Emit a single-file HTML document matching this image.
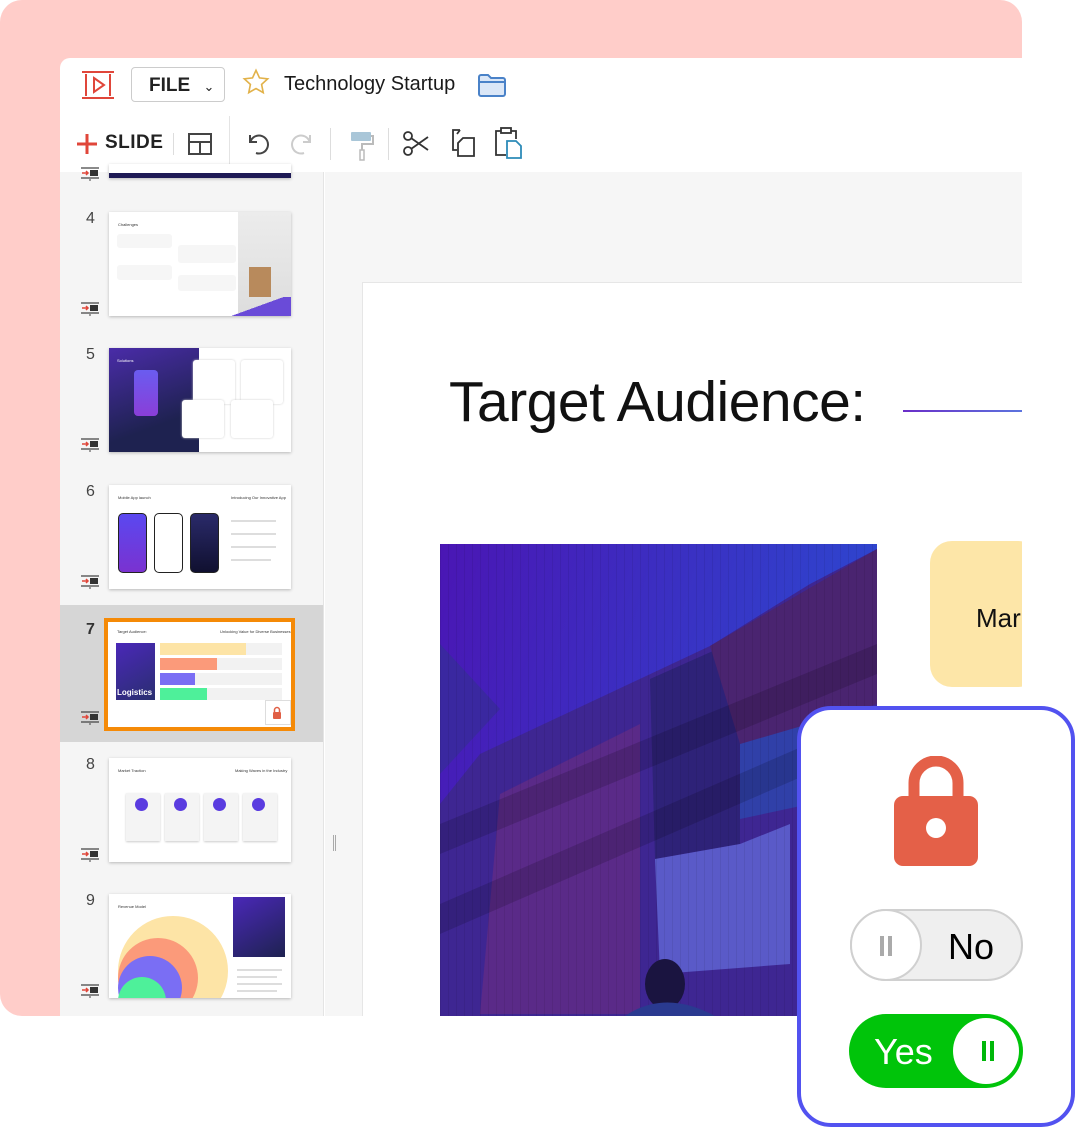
<!DOCTYPE html>
<html><head><meta charset="utf-8"><style>
*{margin:0;padding:0;box-sizing:border-box}
body{width:1076px;height:1128px;position:relative;background:#fff;font-family:"Liberation Sans",sans-serif;overflow:hidden}
.abs{position:absolute}
.pink{left:0;top:0;width:1022px;height:1016px;background:#ffcdc9;border-radius:22px}
.win{left:60px;top:58px;width:962px;height:958px;background:#fff;border-top-left-radius:10px;overflow:hidden}
.side{left:0;top:114px;width:264px;height:850px;background:#f5f5f5;border-right:1px solid #e4e4e4}
.canvas{left:265px;top:114px;width:700px;height:850px;background:#f6f6f6}
.num{font-size:16px;color:#444;left:26px}
.th{left:49px;width:182px;height:104px;background:#fff;box-shadow:0 1px 3px rgba(0,0,0,.25);overflow:hidden}
.ic{left:20px;width:20px;height:14px}
.t{font-size:4px;color:#333}
.l{height:2px;background:#ddd;position:absolute}
</style></head><body>
<div class="abs pink"></div>
<div class="abs win">
 <svg class="abs" style="left:20px;top:12px" width="36" height="30" viewBox="0 0 36 30"><path d="M2 2H34M2 28H34M6 4V26M30 4V26" stroke="#e0463a" stroke-width="2" fill="none"/><path d="M14 8L24 15L14 22Z" stroke="#e0463a" stroke-width="2" fill="none"/></svg>
 <div class="abs" style="left:71px;top:9px;width:94px;height:35px;border:1px solid #ccc;border-radius:4px;font-weight:bold;font-size:19px;color:#222;padding:7px 0 0 17px">FILE <span style="font-weight:normal;font-size:13px;margin-left:8px">&#8964;</span></div>
 <svg class="abs" style="left:182px;top:10px" width="28" height="28" viewBox="0 0 24 24"><path d="M12 2l3 6.5 7 .8-5.2 4.8 1.4 7L12 17.6 5.8 21.1l1.4-7L2 9.3l7-.8z" fill="none" stroke="#e2b24a" stroke-width="1.4"/></svg>
 <div class="abs" style="left:224px;top:15px;font-size:20px;color:#1a1a1a">Technology Startup</div>
 <svg class="abs" style="left:418px;top:15px" width="28" height="24" viewBox="0 0 28 24"><path d="M1 4a2 2 0 012-2h7l3 3h12a2 2 0 012 2v14a2 2 0 01-2 2H3a2 2 0 01-2-2z" fill="#dbe7f7" stroke="#4a82c8" stroke-width="2"/><path d="M1 9H27" stroke="#4a82c8" stroke-width="2"/></svg>
 <svg class="abs" style="left:16px;top:75px" width="22" height="22"><path d="M11 1V21M1 11H21" stroke="#e0463a" stroke-width="3"/></svg>
 <div class="abs" style="left:45px;top:74px;font-weight:bold;font-size:19px;color:#222;letter-spacing:.5px">SLIDE</div>
 <div class="abs" style="left:113px;top:75px;width:1px;height:22px;background:#ddd"></div>
 <svg class="abs" style="left:128px;top:75px" width="24" height="22"><rect x="1" y="1" width="22" height="20" fill="none" stroke="#444" stroke-width="2"/><path d="M1 9H23M12 9V21" stroke="#444" stroke-width="2"/></svg>
 <div class="abs" style="left:169px;top:58px;width:1px;height:56px;background:#e4e4e4"></div>
 <svg class="abs" style="left:184px;top:73px" width="26" height="26" viewBox="0 0 26 26"><path d="M6 4V11H13" fill="none" stroke="#444" stroke-width="2"/><path d="M6.5 10.5A9 9 0 1 1 12 22" fill="none" stroke="#444" stroke-width="2"/></svg>
 <svg class="abs" style="left:230px;top:73px" width="26" height="26" viewBox="0 0 26 26"><path d="M20 4V11H13" fill="none" stroke="#ccc" stroke-width="2"/><path d="M19.5 10.5A9 9 0 1 0 14 22" fill="none" stroke="#ccc" stroke-width="2"/></svg>
 <div class="abs" style="left:270px;top:70px;width:1px;height:32px;background:#ddd"></div>
 <svg class="abs" style="left:290px;top:72px" width="24" height="32"><rect x="1" y="2" width="20" height="9" rx="1" fill="#a9c6d8"/><path d="M21 6H23V14H12V20" fill="none" stroke="#bbb" stroke-width="2"/><rect x="10" y="20" width="4" height="10" fill="none" stroke="#bbb" stroke-width="1.5"/></svg>
 <div class="abs" style="left:328px;top:70px;width:1px;height:32px;background:#ddd"></div>
 <svg class="abs" style="left:343px;top:72px" width="27" height="27" viewBox="0 0 27 27"><circle cx="5" cy="6" r="4" fill="none" stroke="#333" stroke-width="1.8"/><circle cx="5" cy="21" r="4" fill="none" stroke="#333" stroke-width="1.8"/><path d="M8 8L25 20M8 19L25 7" stroke="#333" stroke-width="1.8"/></svg>
 <svg class="abs" style="left:390px;top:70px" width="26" height="30" viewBox="0 0 26 30"><path d="M10 2H3V22H7" fill="none" stroke="#333" stroke-width="1.8"/><path d="M10 2L7 6" stroke="#333" stroke-width="1.8"/><path d="M13 10H24V28H8V15Z" fill="none" stroke="#333" stroke-width="1.8"/></svg>
 <svg class="abs" style="left:434px;top:69px" width="28" height="32" viewBox="0 0 28 32"><path d="M7 4H2V28H12" fill="none" stroke="#333" stroke-width="1.8"/><path d="M17 4H22V12" fill="none" stroke="#333" stroke-width="1.8"/><rect x="7" y="1" width="10" height="5" fill="none" stroke="#333" stroke-width="1.8"/><path d="M13 14H22L27 19V31H13Z" fill="none" stroke="#2d8bb8" stroke-width="1.8"/></svg>

 <div class="abs side">
  <div class="abs th" style="top:-8px;height:14px"><div style="position:absolute;bottom:0;width:100%;height:5px;background:#1e1a55"></div></div>

  <div class="abs num" style="top:38px">4</div>
  <div class="abs th" style="top:40px">
   <div class="abs t" style="left:9px;top:10px">Challenges</div>
   <div class="abs" style="left:8px;top:22px;width:55px;height:14px;background:#f6f6f6;border-radius:3px"></div>
   <div class="abs" style="left:69px;top:33px;width:58px;height:18px;background:#f6f6f6;border-radius:3px"></div>
   <div class="abs" style="left:8px;top:53px;width:55px;height:15px;background:#f6f6f6;border-radius:3px"></div>
   <div class="abs" style="left:69px;top:63px;width:58px;height:16px;background:#f6f6f6;border-radius:3px"></div>
   <div class="abs" style="left:129px;top:0;width:53px;height:104px;background:linear-gradient(#ececec,#ddd)"></div>
   <div class="abs" style="left:140px;top:55px;width:22px;height:30px;background:#b88a5c"></div>
   <div class="abs" style="left:112px;top:85px;width:70px;height:20px;background:linear-gradient(160deg,transparent 50%,#6a4bd8 50%)"></div>
  </div>

  <div class="abs num" style="top:174px">5</div>
  <div class="abs th" style="top:176px">
   <div class="abs" style="left:0;top:0;width:90px;height:104px;background:linear-gradient(160deg,#4a2ca8,#1e2250 70%)"></div>
   <div class="abs" style="left:25px;top:22px;width:24px;height:46px;border-radius:4px;background:linear-gradient(#6a5cf0,#8a3ed8)"></div>
   <div class="abs t" style="left:8px;top:10px;color:#fff">Solutions</div>
   <div class="abs" style="left:84px;top:12px;width:42px;height:44px;background:#fff;border-radius:3px;box-shadow:0 0 2px #ccc"></div>
   <div class="abs" style="left:132px;top:12px;width:42px;height:44px;background:#fff;border-radius:3px;box-shadow:0 0 2px #ccc"></div>
   <div class="abs" style="left:73px;top:52px;width:42px;height:38px;background:#fff;border-radius:3px;box-shadow:0 0 2px #ccc"></div>
   <div class="abs" style="left:122px;top:52px;width:42px;height:38px;background:#fff;border-radius:3px;box-shadow:0 0 2px #ccc"></div>
  </div>

  <div class="abs num" style="top:311px">6</div>
  <div class="abs th" style="top:313px">
   <div class="abs t" style="left:9px;top:10px">Mobile App launch</div>
   <div class="abs t" style="left:122px;top:10px">Introducing Our Innovative App</div>
   <div class="abs" style="left:9px;top:28px;width:29px;height:60px;border-radius:5px;background:linear-gradient(#5a48f0,#7a32d0);border:1.5px solid #222"></div>
   <div class="abs" style="left:45px;top:28px;width:29px;height:60px;border-radius:5px;background:#fff;border:1.5px solid #222"></div>
   <div class="abs" style="left:81px;top:28px;width:29px;height:60px;border-radius:5px;background:linear-gradient(#2a2a6a,#101030);border:1.5px solid #222"></div>
   <div class="l" style="left:122px;top:35px;width:45px"></div><div class="l" style="left:122px;top:48px;width:45px"></div><div class="l" style="left:122px;top:61px;width:45px"></div><div class="l" style="left:122px;top:74px;width:40px"></div>
  </div>

  <div class="abs" style="left:0;top:433px;width:263px;height:137px;background:#d6d6d6"></div>
  <div class="abs num" style="top:449px;font-weight:bold;color:#333">7</div>
  <div class="abs th" style="left:44px;top:446px;width:191px;height:113px;border:4px solid #f58a07;box-shadow:none">
   <div class="abs t" style="left:9px;top:7px">Target Audience:</div>
   <div class="abs t" style="left:112px;top:7px">Unlocking Value for Diverse Businesses</div>
   <div class="abs" style="left:8px;top:21px;width:39px;height:57px;background:linear-gradient(150deg,#4a28b8,#2a2e70)"></div>
   <div class="abs" style="left:9px;top:66px;color:#fff;font-weight:bold;font-size:8px">Logistics</div>
   <div class="abs" style="left:52px;top:21px;width:122px;height:12px;background:#f2f2f2"></div><div class="abs" style="left:52px;top:21px;width:86px;height:12px;background:#fde4a6"></div>
   <div class="abs" style="left:52px;top:36px;width:122px;height:12px;background:#f2f2f2"></div><div class="abs" style="left:52px;top:36px;width:57px;height:12px;background:#fb9a7a"></div>
   <div class="abs" style="left:52px;top:51px;width:122px;height:12px;background:#f2f2f2"></div><div class="abs" style="left:52px;top:51px;width:35px;height:12px;background:#7a6ef4"></div>
   <div class="abs" style="left:52px;top:66px;width:122px;height:12px;background:#f2f2f2"></div><div class="abs" style="left:52px;top:66px;width:47px;height:12px;background:#4ef09a"></div>
   <div class="abs" style="left:157px;top:78px;width:26px;height:25px;background:#fff;border:1px solid #ddd"></div>
   <svg class="abs" style="left:164px;top:84px" width="10" height="13"><path d="M2.5 6V4a2.5 2.5 0 015 0V6" fill="none" stroke="#e05f45" stroke-width="1.5"/><rect x="1" y="6" width="8" height="7" rx="1" fill="#e05f45"/></svg>
  </div>

  <div class="abs num" style="top:584px">8</div>
  <div class="abs th" style="top:586px">
   <div class="abs t" style="left:9px;top:10px">Market Traction</div>
   <div class="abs t" style="left:126px;top:10px">Making Waves in the Industry</div>
   <div class="abs" style="left:17px;top:35px;width:34px;height:48px;background:#f4f4f4;box-shadow:0 1px 2px #ccc"></div>
   <div class="abs" style="left:56px;top:35px;width:34px;height:48px;background:#f4f4f4;box-shadow:0 1px 2px #ccc"></div>
   <div class="abs" style="left:95px;top:35px;width:34px;height:48px;background:#f4f4f4;box-shadow:0 1px 2px #ccc"></div>
   <div class="abs" style="left:134px;top:35px;width:34px;height:48px;background:#f4f4f4;box-shadow:0 1px 2px #ccc"></div>
   <div class="abs" style="left:26px;top:40px;width:13px;height:13px;border-radius:50%;background:#5a3ce0"></div>
   <div class="abs" style="left:65px;top:40px;width:13px;height:13px;border-radius:50%;background:#5a3ce0"></div>
   <div class="abs" style="left:104px;top:40px;width:13px;height:13px;border-radius:50%;background:#5a3ce0"></div>
   <div class="abs" style="left:143px;top:40px;width:13px;height:13px;border-radius:50%;background:#5a3ce0"></div>
  </div>

  <div class="abs num" style="top:720px">9</div>
  <div class="abs th" style="top:722px">
   <div class="abs t" style="left:9px;top:10px">Revenue Model</div>
   <div class="abs" style="left:9px;top:22px;width:110px;height:110px;border-radius:50%;background:#fde4a6"></div>
   <div class="abs" style="left:9px;top:44px;width:80px;height:80px;border-radius:50%;background:#fb9a7a"></div>
   <div class="abs" style="left:9px;top:62px;width:64px;height:64px;border-radius:50%;background:#7a6ef4"></div>
   <div class="abs" style="left:9px;top:83px;width:48px;height:48px;border-radius:50%;background:#4ef09a"></div>
   <div class="abs" style="left:124px;top:3px;width:52px;height:60px;background:linear-gradient(150deg,#4a28b8,#1e2250)"></div>
   <div class="l" style="left:128px;top:75px;width:45px"></div><div class="l" style="left:128px;top:82px;width:40px"></div><div class="l" style="left:128px;top:89px;width:45px"></div><div class="l" style="left:128px;top:96px;width:40px"></div>
  </div>
 </div>
 <svg width="0" height="0" style="position:absolute"><defs><g id="si"><path d="M1 2H19M1 12H19" stroke="#444" stroke-width="1.2"/><path d="M2 7H8M6 5L8 7L6 9" stroke="#e0463a" stroke-width="1.5" fill="none"/><rect x="10" y="4" width="8" height="6" fill="#333"/><path d="M10 13V15" stroke="#444"/></g></defs></svg>
 <svg class="abs" style="left:20px;top:108px" width="20" height="16"><use href="#si"/></svg>
 <svg class="abs" style="left:20px;top:243px" width="20" height="16"><use href="#si"/></svg>
 <svg class="abs" style="left:20px;top:379px" width="20" height="16"><use href="#si"/></svg>
 <svg class="abs" style="left:20px;top:516px" width="20" height="16"><use href="#si"/></svg>
 <svg class="abs" style="left:20px;top:652px" width="20" height="16"><use href="#si"/></svg>
 <svg class="abs" style="left:20px;top:789px" width="20" height="16"><use href="#si"/></svg>
 <svg class="abs" style="left:20px;top:925px" width="20" height="16"><use href="#si"/></svg>

 <div class="abs canvas">
  <div class="abs" style="left:8px;top:663px;width:3px;height:16px;border-left:1px solid #aaa;border-right:1px solid #aaa"></div>
  <div class="abs" style="left:37px;top:110px;width:670px;height:760px;background:#fff;border-top:1px solid #e6e6e6;border-left:1px solid #e6e6e6"></div>
  <div class="abs" style="left:124px;top:197px;font-size:57px;color:#111;letter-spacing:-0.5px">Target Audience:</div>
  <div class="abs" style="left:578px;top:238px;width:130px;height:2px;background:linear-gradient(90deg,#6a2ec8,#5a7ae0)"></div>
  <svg class="abs" style="left:115px;top:372px" width="437" height="472" viewBox="0 0 437 472">
   <defs><linearGradient id="sky" x1="0" y1="0" x2="1" y2="0.3"><stop offset="0" stop-color="#4a16b4"/><stop offset="1" stop-color="#2c48d0"/></linearGradient>
   <pattern id="st" width="8" height="40" patternUnits="userSpaceOnUse"><path d="M0 0V40" stroke="#000" stroke-opacity=".07" stroke-width="2"/></pattern></defs>
   <rect width="437" height="472" fill="url(#sky)"/>
   <path d="M0 100L60 165L0 230Z" fill="#3a28a0"/>
   <path d="M40 210L270 102L370 40L437 5V472H0V260Z" fill="#3e2692"/>
   <path d="M210 135L300 95V300L215 315Z" fill="#2e2278"/>
   <path d="M300 95L370 60V260L300 275Z" fill="#3040a8"/>
   <path d="M215 315L300 300L350 280V420L220 430Z" fill="#5a5ac8"/>
   <path d="M270 102L437 5V160L300 200Z" fill="#4a2470"/>
   <path d="M60 250L200 180V470H40Z" fill="#5a2a88"/>
   <path d="M0 280L437 100V130L0 310Z" fill="#000" fill-opacity=".15"/>
   <path d="M0 360L437 170V200L0 390Z" fill="#000" fill-opacity=".15"/>
   <rect width="437" height="472" fill="url(#st)"/>
   <ellipse cx="225" cy="440" rx="20" ry="25" fill="#1a1440"/>
   <path d="M185 472Q225 445 275 472Z" fill="#2a3a90"/>
  </svg>
  <div class="abs" style="left:605px;top:369px;width:110px;height:146px;background:#fde6a8;border-radius:22px"></div>
  <div class="abs" style="left:651px;top:431px;font-size:26px;color:#111">Mar</div>
 </div>
</div>

<div class="abs" style="left:797px;top:706px;width:278px;height:421px;border:4px solid #5252f0;border-radius:34px;background:#fff"></div>
<svg class="abs" style="left:893px;top:756px" width="86" height="112" viewBox="0 0 86 112"><path d="M21 44V27a22 22 0 0144 0V44" fill="none" stroke="#e46048" stroke-width="11"/><rect x="1" y="40" width="84" height="70" rx="9" fill="#e46048"/><circle cx="43" cy="72" r="10" fill="#fff"/></svg>
<div class="abs" style="left:850px;top:909px;width:173px;height:72px;border-radius:36px;background:#efefef;border:2px solid #d0d0d0"></div>
<div class="abs" style="left:850px;top:909px;width:72px;height:72px;border-radius:36px;background:#fff;border:2px solid #d0d0d0"></div>
<div class="abs" style="left:880px;top:936px;width:4px;height:20px;background:#aaa"></div><div class="abs" style="left:888px;top:936px;width:4px;height:20px;background:#aaa"></div>
<div class="abs" style="left:948px;top:926px;font-size:36px;color:#000">No</div>
<div class="abs" style="left:849px;top:1014px;width:174px;height:74px;border-radius:37px;background:#00c40a"></div>
<div class="abs" style="left:953px;top:1018px;width:66px;height:66px;border-radius:33px;background:#fff"></div>
<div class="abs" style="left:982px;top:1041px;width:4px;height:20px;background:#00b80a"></div><div class="abs" style="left:990px;top:1041px;width:4px;height:20px;background:#00b80a"></div>
<div class="abs" style="left:874px;top:1031px;font-size:36px;color:#fff">Yes</div>
</body></html>
